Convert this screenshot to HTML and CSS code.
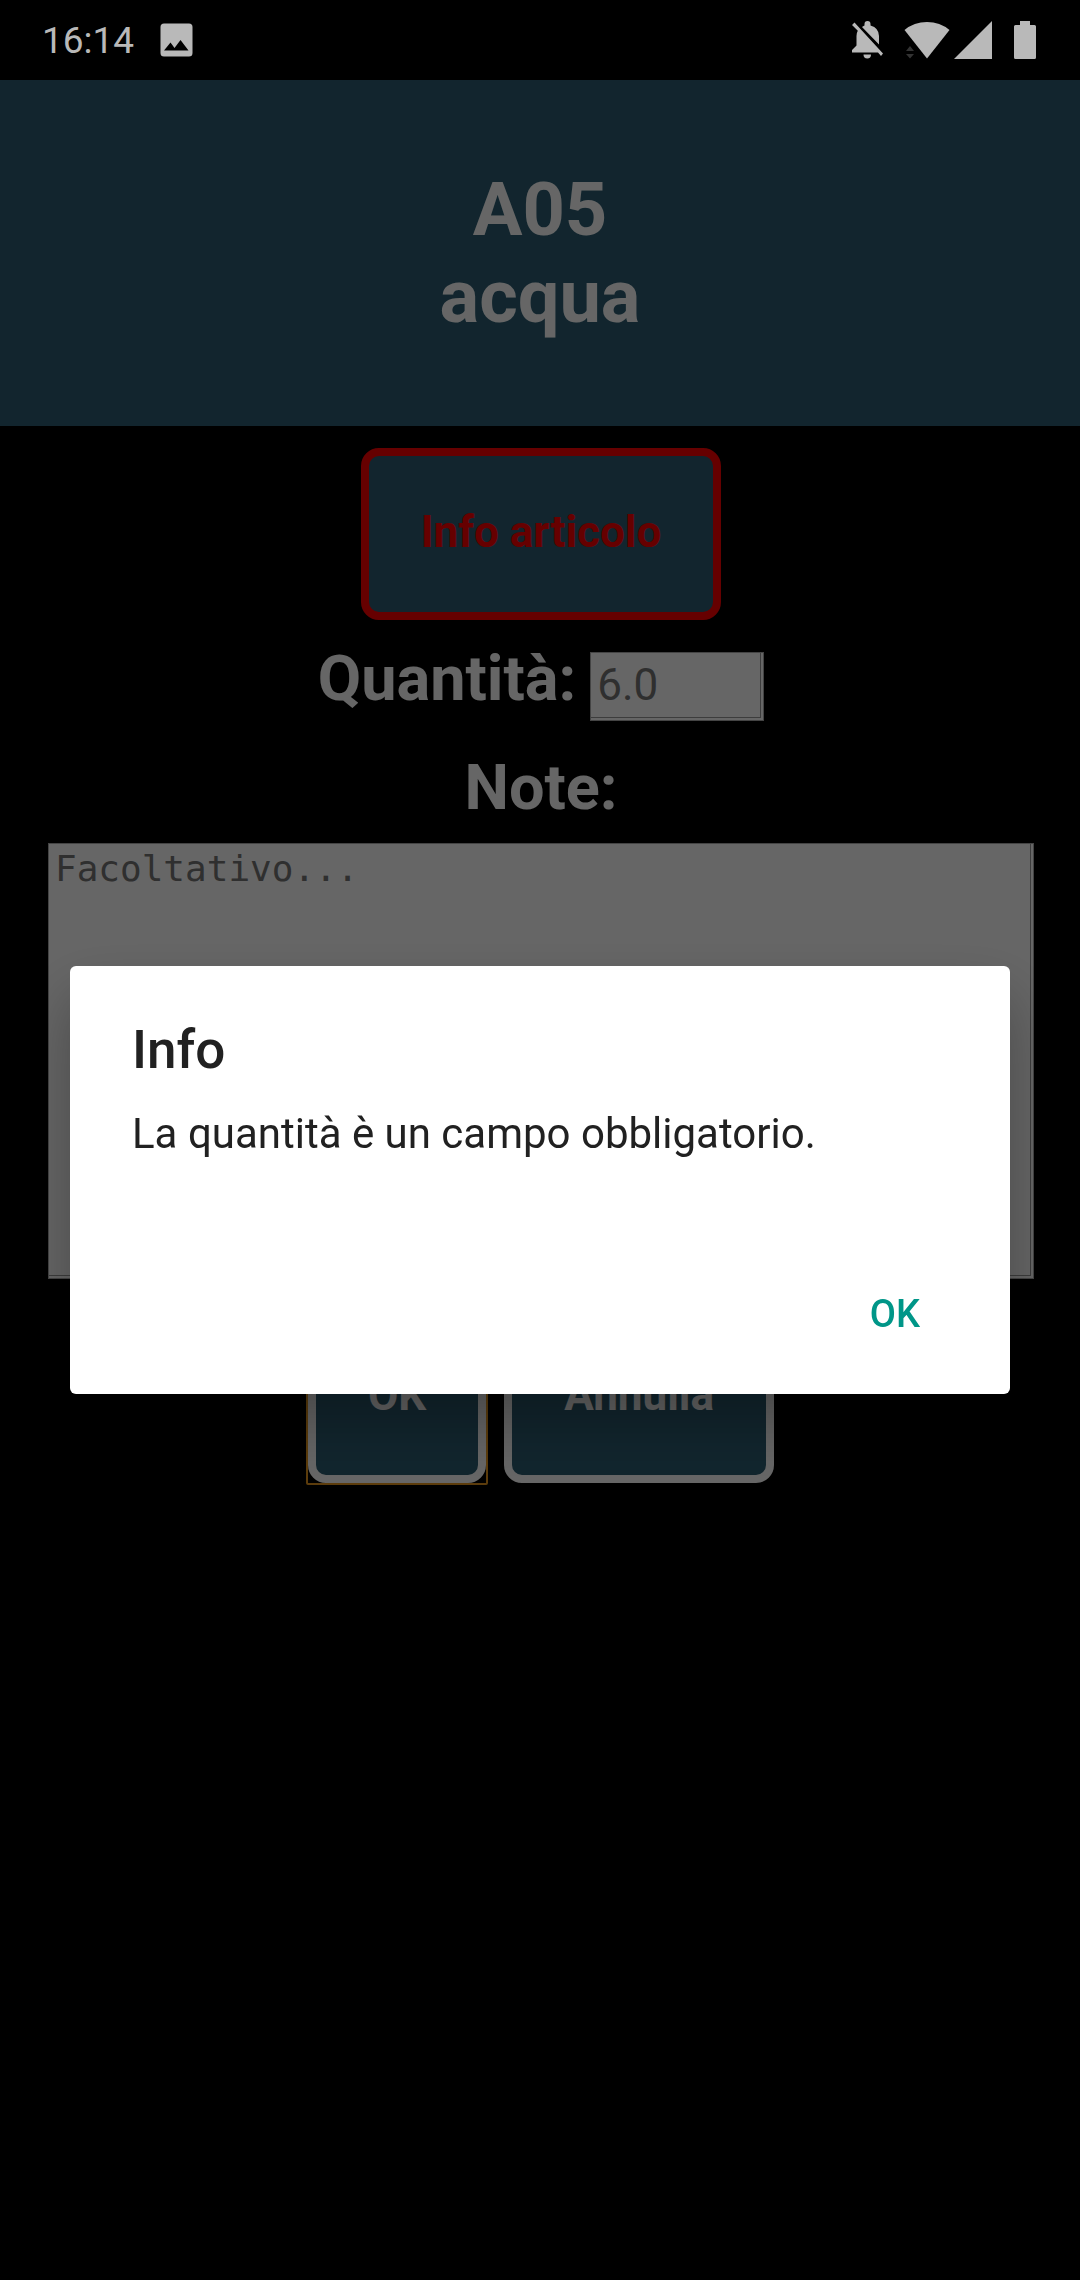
FILE: index.html
```html
<!DOCTYPE html>
<html lang="it">
<head>
<meta charset="utf-8">
<meta name="viewport" content="width=device-width, initial-scale=1">
<title>A05 acqua</title>
<link rel="stylesheet" href="styles.css">
</head>
<body>
<div class="status">
  <time class="clock">16:14</time>
  <svg class="ic-photo" viewBox="0 0 33 34" aria-hidden="true"><path fill-rule="evenodd" d="M4 0.500H29Q32.500 0.500 32.500 4V30Q32.500 33.500 29 33.500H4Q0.500 33.500 0.500 30V4Q0.500 0.500 4 0.500ZM4 27.500H28.500L20.500 17L14.500 25L10.500 19.500Z"/></svg>
  <span class="spacer"></span>
  <svg class="ic-bell" viewBox="0 0 32 38" aria-hidden="true"><path d="M0 4L2.500 1.500L31 32.500L29 35L26 31.500H0V29L4.500 24.500V15Q4.500 12 5.800 9.800Z"/><path d="M10 6Q11 5 12.500 4.500V3Q12.500 0 15.500 0Q18.500 0 18.500 3V4.500Q27 7 27 15V23.500Z"/><path d="M11.500 33.500H19Q19 37.500 15.300 37.500Q11.500 37.500 11.500 33.500Z"/></svg>
  <svg class="ic-wifi" viewBox="0 0 46 37" aria-hidden="true"><path d="M0.500 8Q10 0 23 0Q36 0 45.500 8L23 36.500Z"/><path class="faint" d="M2 29L6 24L10 29ZM2 32H10L6 36.500Z"/></svg>
  <svg class="ic-signal" viewBox="0 0 38 38" aria-hidden="true"><path d="M0 38L38 0V38Z"/></svg>
  <svg class="ic-battery" viewBox="0 0 22 38" aria-hidden="true"><path d="M6 0H16V4H20.500Q22 4 22 5.500V36.500Q22 38 20.500 38H1.500Q0 38 0 36.500V5.500Q0 4 1.500 4H6Z"/></svg>
</div>
<header class="header"><h1>A05<br>acqua</h1></header>
<main class="page">
  <button type="button" class="btn btn-info">Info articolo</button>
  <form class="form">
    <div class="qty">
      <label class="label" for="qty">Quantità:</label>
      <input class="field qty-input" id="qty" type="text" inputmode="decimal" placeholder="6.0">
    </div>
    <label class="label" for="note">Note:</label>
    <textarea class="field note" id="note" placeholder="Facoltativo..."></textarea>
    <div class="actions">
      <button type="button" class="btn btn-focus">OK</button>
      <button type="button" class="btn">Annulla</button>
    </div>
  </form>
</main>
<div class="scrim">
  <div class="dialog" role="alertdialog" aria-modal="true" aria-labelledby="dlg-title" aria-describedby="dlg-text">
    <h2 id="dlg-title">Info</h2>
    <p id="dlg-text">La quantità è un campo obbligatorio.</p>
    <button type="button" class="dialog-ok">OK</button>
  </div>
</div>
</body>
</html>
```
FILE: styles.css
```css
* { box-sizing: border-box; }

body {
  margin: 0;
  min-height: 100vh;
  background: #000;
  color: #fff;
  font-family: Roboto, sans-serif;
}

/* status bar */
.status {
  display: flex;
  align-items: center;
  height: 80px;
  padding: 0 44px 0 42px;
  background: #000;
  fill: #b9b9b9;
  color: #b9b9b9;
}
.clock { padding-top: 2px; font-size: 37px; line-height: 44px; }
.spacer { flex: 1; }
.ic-photo { width: 33px; height: 34px; margin-left: 26px; }
.ic-bell { width: 32px; height: 38px; }
.ic-wifi { width: 46px; height: 37px; margin-left: 20px; }
.ic-signal { width: 38px; height: 38px; margin-left: 4px; }
.ic-battery { width: 22px; height: 38px; margin-left: 22px; }
.faint { fill: #333; }

/* page */
.header {
  padding: 86px 24px;
  background: #2d5e73;
  text-align: center;
}
.header h1 { margin: 0; font-size: 74px; line-height: 87px; }

.page {
  display: flex;
  flex-direction: column;
  align-items: center;
  padding: 22px 46px 22px 48px;
}
.btn {
  height: 172px;
  padding: 0 52px 4px;
  border: 8px solid #fff;
  border-radius: 18px;
  background: #2d5e73;
  color: #fff;
  font: bold 44px Roboto, sans-serif;
}
.btn-info { border-color: #f00; color: #f00; }

/* square focus ring around the rounded button */
.btn-focus { position: relative; }
.btn-focus::after {
  content: "";
  position: absolute;
  inset: -10px;
  border: 2px solid #e5971e;
  border-radius: 2px;
}

.form {
  display: flex;
  flex-direction: column;
  align-items: center;
  align-self: stretch;
  padding-top: 22px;
}
.qty { display: flex; align-items: baseline; gap: 14px; margin-bottom: 30px; }
.label { font-size: 63px; font-weight: bold; line-height: 74px; }
.field {
  border: 1px solid #aaa;
  border-radius: 0;
  background: #fff;
  box-shadow: inset -2px -2px #fff, inset -3px -3px #999;
}
.field::placeholder { color: #757575; opacity: 1; }
.qty-input {
  width: 174px;
  height: 69px;
  padding: 4px 8px 6px 6px;
  font: 44px Roboto, sans-serif;
}
.note {
  display: block;
  width: 100%;
  height: 436px;
  margin-top: 18px;
  padding: 4px 6px;
  resize: none;
  font: 36px/42px "DejaVu Sans Mono", monospace;
}
.actions { display: flex; gap: 18px; margin-top: 32px; }

/* modal */
.scrim {
  position: fixed;
  inset: 80px 0 0;
  display: flex;
  align-items: center;
  justify-content: center;
  padding: 0 70px;
  background: rgba(0, 0, 0, 0.6);
}
.dialog {
  display: flex;
  flex-direction: column;
  flex: 1;
  padding: 52px 64px 32px 62px;
  border-radius: 6px;
  background: #fff;
  color: #212121;
  box-shadow: 0 30px 60px rgba(0, 0, 0, 0.3);
}
.dialog h2 { margin: 0; font-size: 53px; font-weight: 500; line-height: 64px; }
.dialog p { margin: 16px 0 96px; font-size: 42px; line-height: 72px; }
.dialog-ok {
  align-self: flex-end;
  height: 96px;
  padding: 0 26px;
  border: 0;
  background: none;
  color: #009688;
  font: 500 38px Roboto, sans-serif;
}
```
